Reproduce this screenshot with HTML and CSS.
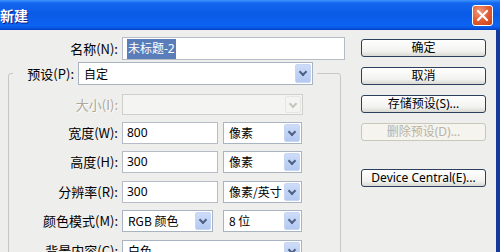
FILE: index.html
```html
<!DOCTYPE html>
<html lang="zh-CN">
<head>
  <meta charset="UTF-8">
  <meta name="viewport" content="width=device-width, initial-scale=1.0">
  <title>新建</title>
  <link rel="stylesheet" href="styles.css">
</head>
<body>

  <div class="window">
    <!-- Title Bar -->
    <div class="titlebar">
      <span class="title">新建</span>
      <span class="close">
        <svg width="13" height="13" viewBox="0 0 13 13"><path d="M2 2 L11 11 M11 2 L2 11" stroke="#fff" stroke-width="2.2" stroke-linecap="round"/></svg>
      </span>
    </div>

    <div class="client">
      <!-- Form -->
      <div class="form">
        <div class="row name-row">
          <label class="label">名称(N):</label>
          <div class="field text name-field"><span class="selected">未标题-2</span></div>
        </div>

        <fieldset class="group">
          <legend class="preset">
            <label class="label">预设(P):</label>
            <div class="field select preset-select">自定<span class="arrow"></span></div>
          </legend>

          <div class="row size-row">
            <label class="label disabled">大小(I):</label>
            <div class="field select is-disabled size-select"><span class="arrow"></span></div>
          </div>

          <div class="row">
            <label class="label">宽度(W):</label>
            <div class="field text num">800</div>
            <div class="field select unit">像素<span class="arrow"></span></div>
          </div>

          <div class="row">
            <label class="label">高度(H):</label>
            <div class="field text num">300</div>
            <div class="field select unit">像素<span class="arrow"></span></div>
          </div>

          <div class="row">
            <label class="label">分辨率(R):</label>
            <div class="field text num">300</div>
            <div class="field select unit">像素/英寸<span class="arrow"></span></div>
          </div>

          <div class="row">
            <label class="label">颜色模式(M):</label>
            <div class="field select mode">RGB 颜色<span class="arrow"></span></div>
            <div class="field select unit">8 位<span class="arrow"></span></div>
          </div>

          <div class="row">
            <label class="label">背景内容(C):</label>
            <div class="field select bg-select">白色<span class="arrow"></span></div>
          </div>
        </fieldset>
      </div>

      <!-- Buttons -->
      <div class="actions">
        <button class="button">确定</button>
        <button class="button">取消</button>
        <button class="button">存储预设(S)...</button>
        <button class="button" disabled>删除预设(D)...</button>
        <button class="button device">Device Central(E)...</button>
      </div>
    </div>
  </div>

</body>
</html>
```

FILE: styles.css
```css
/* General Reset */
* {
  margin: 0;
  padding: 0;
  box-sizing: border-box;
}

body {
  width: 500px;
  height: 252px;
  overflow: hidden;
  background-color: #eeeeec;
  font-family: "Noto Sans", "Noto Sans CJK SC", sans-serif;
  font-size: 12px;
  color: #000;
}

/* Title Bar */
.titlebar {
  height: 30px;
  display: flex;
  align-items: center;
  justify-content: space-between;
  padding-right: 7px;
  background: linear-gradient(to bottom, #3d95ff 0%, #1467ef 10%, #0a5ae6 45%, #0b63f2 85%, #0a56e0 93%, #0040c8 100%);
}

.title {
  color: #fff;
  font-family: "Noto Sans CJK SC", sans-serif;
  font-weight: bold;
  font-size: 14px;
  line-height: 18px;
  text-shadow: 1px 1px #0a1c8a;
}

.close {
  width: 21px;
  height: 21px;
  border: 1px solid #fff;
  border-radius: 3px;
  background: radial-gradient(circle at 35% 30%, #f19a7d, #e0582f 55%, #c8401a);
  display: flex;
  align-items: center;
  justify-content: center;
}

/* Client Area */
.client {
  display: flex;
  height: 222px;
  border-right: 4px solid #163a9c;
}

.form {
  width: 345px;
  padding-top: 7px;
}

.row {
  display: flex;
  align-items: center;
  height: 22px;
  margin-bottom: 7.5px;
}

.label {
  flex: none;
  text-align: right;
  font-family: "Noto Sans CJK SC", sans-serif;
  font-size: 13px;
  line-height: 22px;
  padding-right: 4px;
}

.label.disabled {
  color: #aca899;
  text-shadow: 1px 1px #fff;
}

.name-row {
  height: 23px;
  margin-bottom: 2px;
}

.name-row .label {
  width: 122px;
}

/* Fields */
.field {
  position: relative;
  height: 100%;
  background-color: #fff;
  border: 1px solid #a9b4c2;
  padding-left: 4px;
  line-height: 20px;
  white-space: nowrap;
}

.text {
  border-color: #b5bcc6;
}

.name-field {
  width: 223px;
  line-height: 21px;
}

.selected {
  background-color: #5a7db9;
  color: #fff;
  padding: 1px 1px 2px;
}

.num {
  width: 96px;
  margin-right: 5px;
}

.unit {
  width: 79px;
}

.mode {
  width: 91px;
  margin-right: 10px;
}

.bg-select {
  width: 180px;
}

.select {
  padding-left: 5px;
  font-family: "Noto Sans CJK SC", sans-serif;
}

.arrow {
  position: absolute;
  top: 1px;
  right: 1px;
  bottom: 1px;
  width: 16px;
  border: 1px solid #c7d6f4;
  border-radius: 2px;
  background: linear-gradient(to bottom, #cddcf8, #b4c9f2);
}

.arrow::after {
  content: "";
  position: absolute;
  left: 4px;
  top: 4px;
  width: 4px;
  height: 4px;
  border-right: 2px solid #4d6185;
  border-bottom: 2px solid #4d6185;
  transform: rotate(45deg);
}

.is-disabled {
  background-color: #f4f4f2;
  border-color: #cfcfcb;
}

.is-disabled .arrow {
  border-color: #e6e6e2;
  background: #f4f4f2;
}

.is-disabled .arrow::after {
  border-color: #c9c7ba;
}

.size-select {
  width: 181px;
}

/* Group Box */
.group {
  margin-left: 8px;
  width: 333px;
  border: 1px solid #c8c8c2;
  border-radius: 3px;
  padding: 9px 0 0;
}

.preset {
  display: flex;
  align-items: center;
  height: 23px;
  margin-left: 4px;
  padding-right: 4px;
}

.preset .label {
  width: 65px;
}

.preset-select {
  width: 235px;
  height: 23px;
  line-height: 21px;
}

.group .row .label {
  width: 113px;
}

.size-row {
  height: 21px;
  margin-bottom: 6.5px;
}

/* Buttons */
.actions {
  width: 125px;
  margin-left: 16px;
  padding-top: 9px;
  display: flex;
  flex-direction: column;
  gap: 10px;
}

.button {
  height: 18px;
  border: 1px solid #2d3f5c;
  border-radius: 3px;
  background: linear-gradient(to bottom, #ffffff, #f2f2ef 70%, #d9d8d2);
  font-family: "Noto Sans", "Noto Sans CJK SC", sans-serif;
  font-size: 12px;
  line-height: 16px;
  color: #000;
}

.button:disabled {
  border-color: #c9c7ba;
  background: #f5f4ee;
  color: #b5b3a6;
}

.device {
  margin-top: 18px;
}
```
